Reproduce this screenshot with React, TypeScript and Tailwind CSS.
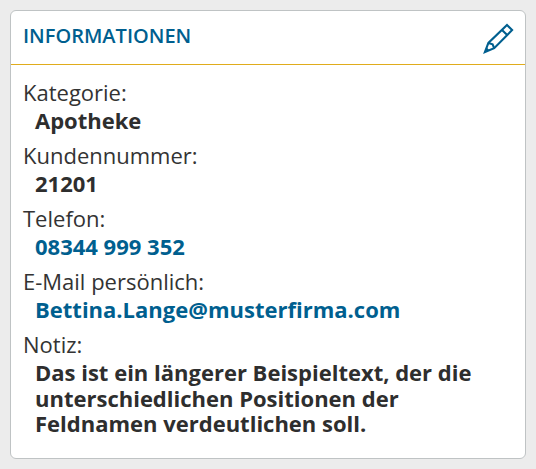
type Field = {
  label: string;
  value: string;
  href?: string;
};

const fields: Field[] = [
  { label: "Kategorie", value: "Apotheke" },
  { label: "Kundennummer", value: "21201" },
  { label: "Telefon", value: "08344 999 352", href: "tel:08344999352" },
  {
    label: "E-Mail persönlich",
    value: "Bettina.Lange@musterfirma.com",
    href: "mailto:Bettina.Lange@musterfirma.com",
  },
  {
    label: "Notiz",
    value:
      "Das ist ein längerer Beispieltext, der die unterschiedlichen Positionen der Feldnamen verdeutlichen soll.",
  },
];

function PencilIcon() {
  return (
    <svg viewBox="0 0 32 32" className="size-8" fill="none" stroke="currentColor" strokeWidth="2.1">
      <path d="M25 2.9 30.1 8 12.2 26.2 2.9 30 6.4 20.9Z" />
      <path d="M20 7.9 25.2 13" />
      <path d="M6.4 20.9 10.6 22.3 12.2 26.2" />
      <path d="M4.3 26.6 6.4 28.7" />
    </svg>
  );
}

function App() {
  return (
    <div className="h-screen overflow-hidden bg-[#ececec] p-[10px] font-['Open_Sans',sans-serif]">
      <section className="h-[449px] w-[516px] rounded-[6px] border border-[#bfc3c4] bg-white">
        <header className="flex h-[54px] items-center justify-between border-b border-[#e0ac1c] pr-[11px] pl-3">
          <h2 className="-mt-[3px] text-[20px] font-semibold text-[#005f8f]">INFORMATIONEN</h2>
          <button aria-label="Bearbeiten" className="text-[#005f8f]">
            <PencilIcon />
          </button>
        </header>
        <dl className="flex flex-col gap-[7.3px] px-3 pt-[13px]">
          {fields.map((field) => (
            <div key={field.label}>
              <dt className="pb-px text-[22px] leading-[29px] text-[#333]">{field.label}:</dt>
              <dd className="pl-3 text-[22px] leading-[25.7px] font-bold text-[#2e2e2e]">
                {field.href ? (
                  <a className="text-[#005f8f]" href={field.href}>
                    {field.value}
                  </a>
                ) : (
                  field.value
                )}
              </dd>
            </div>
          ))}
        </dl>
      </section>
    </div>
  );
}

export default App;
